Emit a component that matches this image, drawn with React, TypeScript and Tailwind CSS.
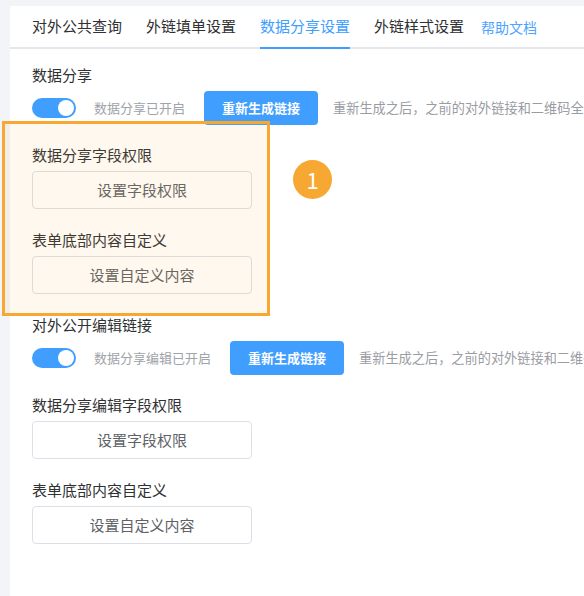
import { useState } from "react";

const font = { fontFamily: '"Noto Sans CJK SC", "Noto Sans", sans-serif' };

const tabs = ["对外公共查询", "外链填单设置", "数据分享设置", "外链样式设置"];

function Toggle({ on }: { on: boolean }) {
  return (
    <span
      className={`flex h-[20px] w-[44px] shrink-0 items-center rounded-full px-[2px] ${
        on ? "justify-end bg-[#409eff]" : "justify-start bg-[#dcdfe6]"
      }`}
    >
      <span className="h-[16px] w-[16px] rounded-full bg-white" />
    </span>
  );
}

function LinkRow({ label }: { label: string }) {
  return (
    <div className="mt-[6px] flex h-[34px] items-center whitespace-nowrap">
      <Toggle on />
      <span className="ml-[18px] text-[13px] text-[#a0a3a9]">{label}</span>
      <button className="ml-[19px] h-[34px] shrink-0 rounded-[4px] bg-[#409eff] px-[18px] text-[13px] font-bold text-white">
        重新生成链接
      </button>
      <span className="ml-[15px] text-[13.2px] text-[#9a9ca3]">
        重新生成之后，之前的对外链接和二维码全部失效
      </span>
    </div>
  );
}

function FieldButton({ text }: { text: string }) {
  return (
    <button className="mt-[6px] flex h-[38px] w-[220px] items-center justify-center rounded-[4px] border border-[#dcdfe6] bg-white text-[15px] text-[#606266]">
      {text}
    </button>
  );
}

function Title({ text, className = "" }: { text: string; className?: string }) {
  return (
    <div className={`h-[20px] text-[15px] leading-[20px] text-[#303133] ${className}`}>
      {text}
    </div>
  );
}

export default function App() {
  const [active, setActive] = useState(2);

  return (
    <div
      className="relative min-h-screen overflow-hidden bg-[#f3f4f7] pl-[10px] pt-[6px]"
      style={font}
    >
      <div className="min-h-[590px] bg-white">
        <div className="flex h-[43px] items-stretch whitespace-nowrap border-b-2 border-[#e4e7ed] pl-[22px]">
          {tabs.map((t, i) => (
            <div
              key={t}
              onClick={() => setActive(i)}
              className={`-mb-[2px] mr-[24px] flex cursor-pointer items-center border-b-2 text-[15px] ${
                i === active
                  ? "border-[#409eff] text-[#409eff]"
                  : "border-transparent text-[#303133]"
              }`}
            >
              {t}
            </div>
          ))}
          <div className="-ml-[7px] flex items-center pt-[1px] text-[14px] text-[#4da3ff]">
            帮助文档
          </div>
        </div>

        <div className="px-[22px] pt-[16px]">
          <Title text="数据分享" />
          <LinkRow label="数据分享已开启" />

          <Title text="数据分享字段权限" className="mt-[20px]" />
          <FieldButton text="设置字段权限" />

          <Title text="表单底部内容自定义" className="mt-[21px]" />
          <FieldButton text="设置自定义内容" />

          <Title text="对外公开编辑链接" className="mt-[21px]" />
          <LinkRow label="数据分享编辑已开启" />

          <Title text="数据分享编辑字段权限" className="mt-[20px]" />
          <FieldButton text="设置字段权限" />

          <Title text="表单底部内容自定义" className="mt-[21px]" />
          <FieldButton text="设置自定义内容" />
        </div>
      </div>

      {/* annotation overlay */}
      <div className="pointer-events-none absolute left-[2px] top-[121px] h-[195px] w-[268px] border-[3px] border-[#f7a832] bg-[rgba(247,168,50,0.08)]" />
      <div className="absolute left-[293px] top-[160px] flex h-[39px] w-[39px] items-center justify-center rounded-full bg-[#f7a832] text-[22px] text-white">
        1
      </div>
    </div>
  );
}
